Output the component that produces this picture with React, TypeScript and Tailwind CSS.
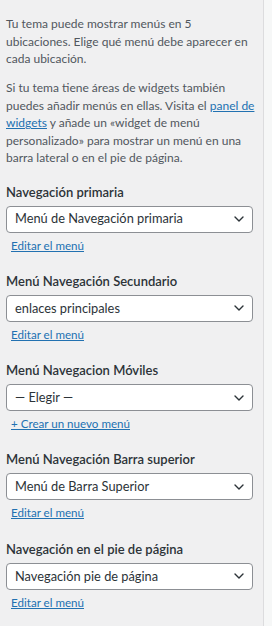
import React from 'react';

const locations = [
  { title: 'Navegación primaria', value: 'Menú de Navegación primaria', link: 'Editar el menú' },
  { title: 'Menú Navegación Secundario', value: 'enlaces principales', link: 'Editar el menú' },
  { title: 'Menú Navegacion Móviles', value: '— Elegir —', link: '+ Crear un nuevo menú' },
  { title: 'Menú Navegación Barra superior', value: 'Menú de Barra Superior', link: 'Editar el menú' },
  { title: 'Navegación en el pie de página', value: 'Navegación pie de página', link: 'Editar el menú' },
];

const Chevron = () => (
  <svg width="10" height="6" viewBox="0 0 10 6" fill="none" className="shrink-0">
    <path d="M1 1l4 4 4-4" stroke="#2c3338" strokeWidth="1.4" strokeLinecap="round" strokeLinejoin="round" />
  </svg>
);

const App: React.FC = () => {
  return (
    <div className="flex min-h-[626px] w-[272px] bg-[#f6f7f7] font-['Segoe_UI',Lato,'Noto_Sans',sans-serif]">
      <div className="w-[264px] shrink-0 border-r border-[#dcdcde] bg-[#f0f0f1] pl-[6px] pr-[4px] pt-[15px]">
        {/* intro */}
        <p className="text-[12px] leading-[17.5px] text-[#50575e]">
          Tu tema puede mostrar menús en 5<br />
          ubicaciones. Elige qué menú debe aparecer en<br />
          cada ubicación.
        </p>
        <p className="mt-[11.5px] text-[12px] leading-[17.5px] text-[#50575e]">
          Si tu tema tiene áreas de widgets también<br />
          puedes añadir menús en ellas. Visita el{' '}
          <a href="#" className="text-[#2271b1] underline">
            panel de
            <br />
            widgets
          </a>{' '}
          y añade un «widget de menú<br />
          personalizado» para mostrar un menú en una<br />
          barra lateral o en el pie de página.
        </p>

        {/* menu locations */}
        <div className="mt-[15px] flex flex-col">
          {locations.map((loc) => (
            <div key={loc.title} className="mb-[17.3px]">
              <h3 className="text-[13px] font-semibold leading-[20px] text-[#2c3338]">{loc.title}</h3>
              <div className="mt-[4px] flex h-[27px] w-[247px] items-center justify-between rounded-[4px] border border-[#8c8f94] bg-white pl-[8px] pr-[8px]">
                <span className="text-[12.8px] text-[#2c3338]">{loc.value}</span>
                <Chevron />
              </div>
              <a href="#" className="mt-[4px] block pl-[5px] text-[11.6px] leading-[17px] text-[#2271b1] underline">
                {loc.link}
              </a>
            </div>
          ))}
        </div>
      </div>
      <div className="flex-1" />
    </div>
  );
};

export default App;
